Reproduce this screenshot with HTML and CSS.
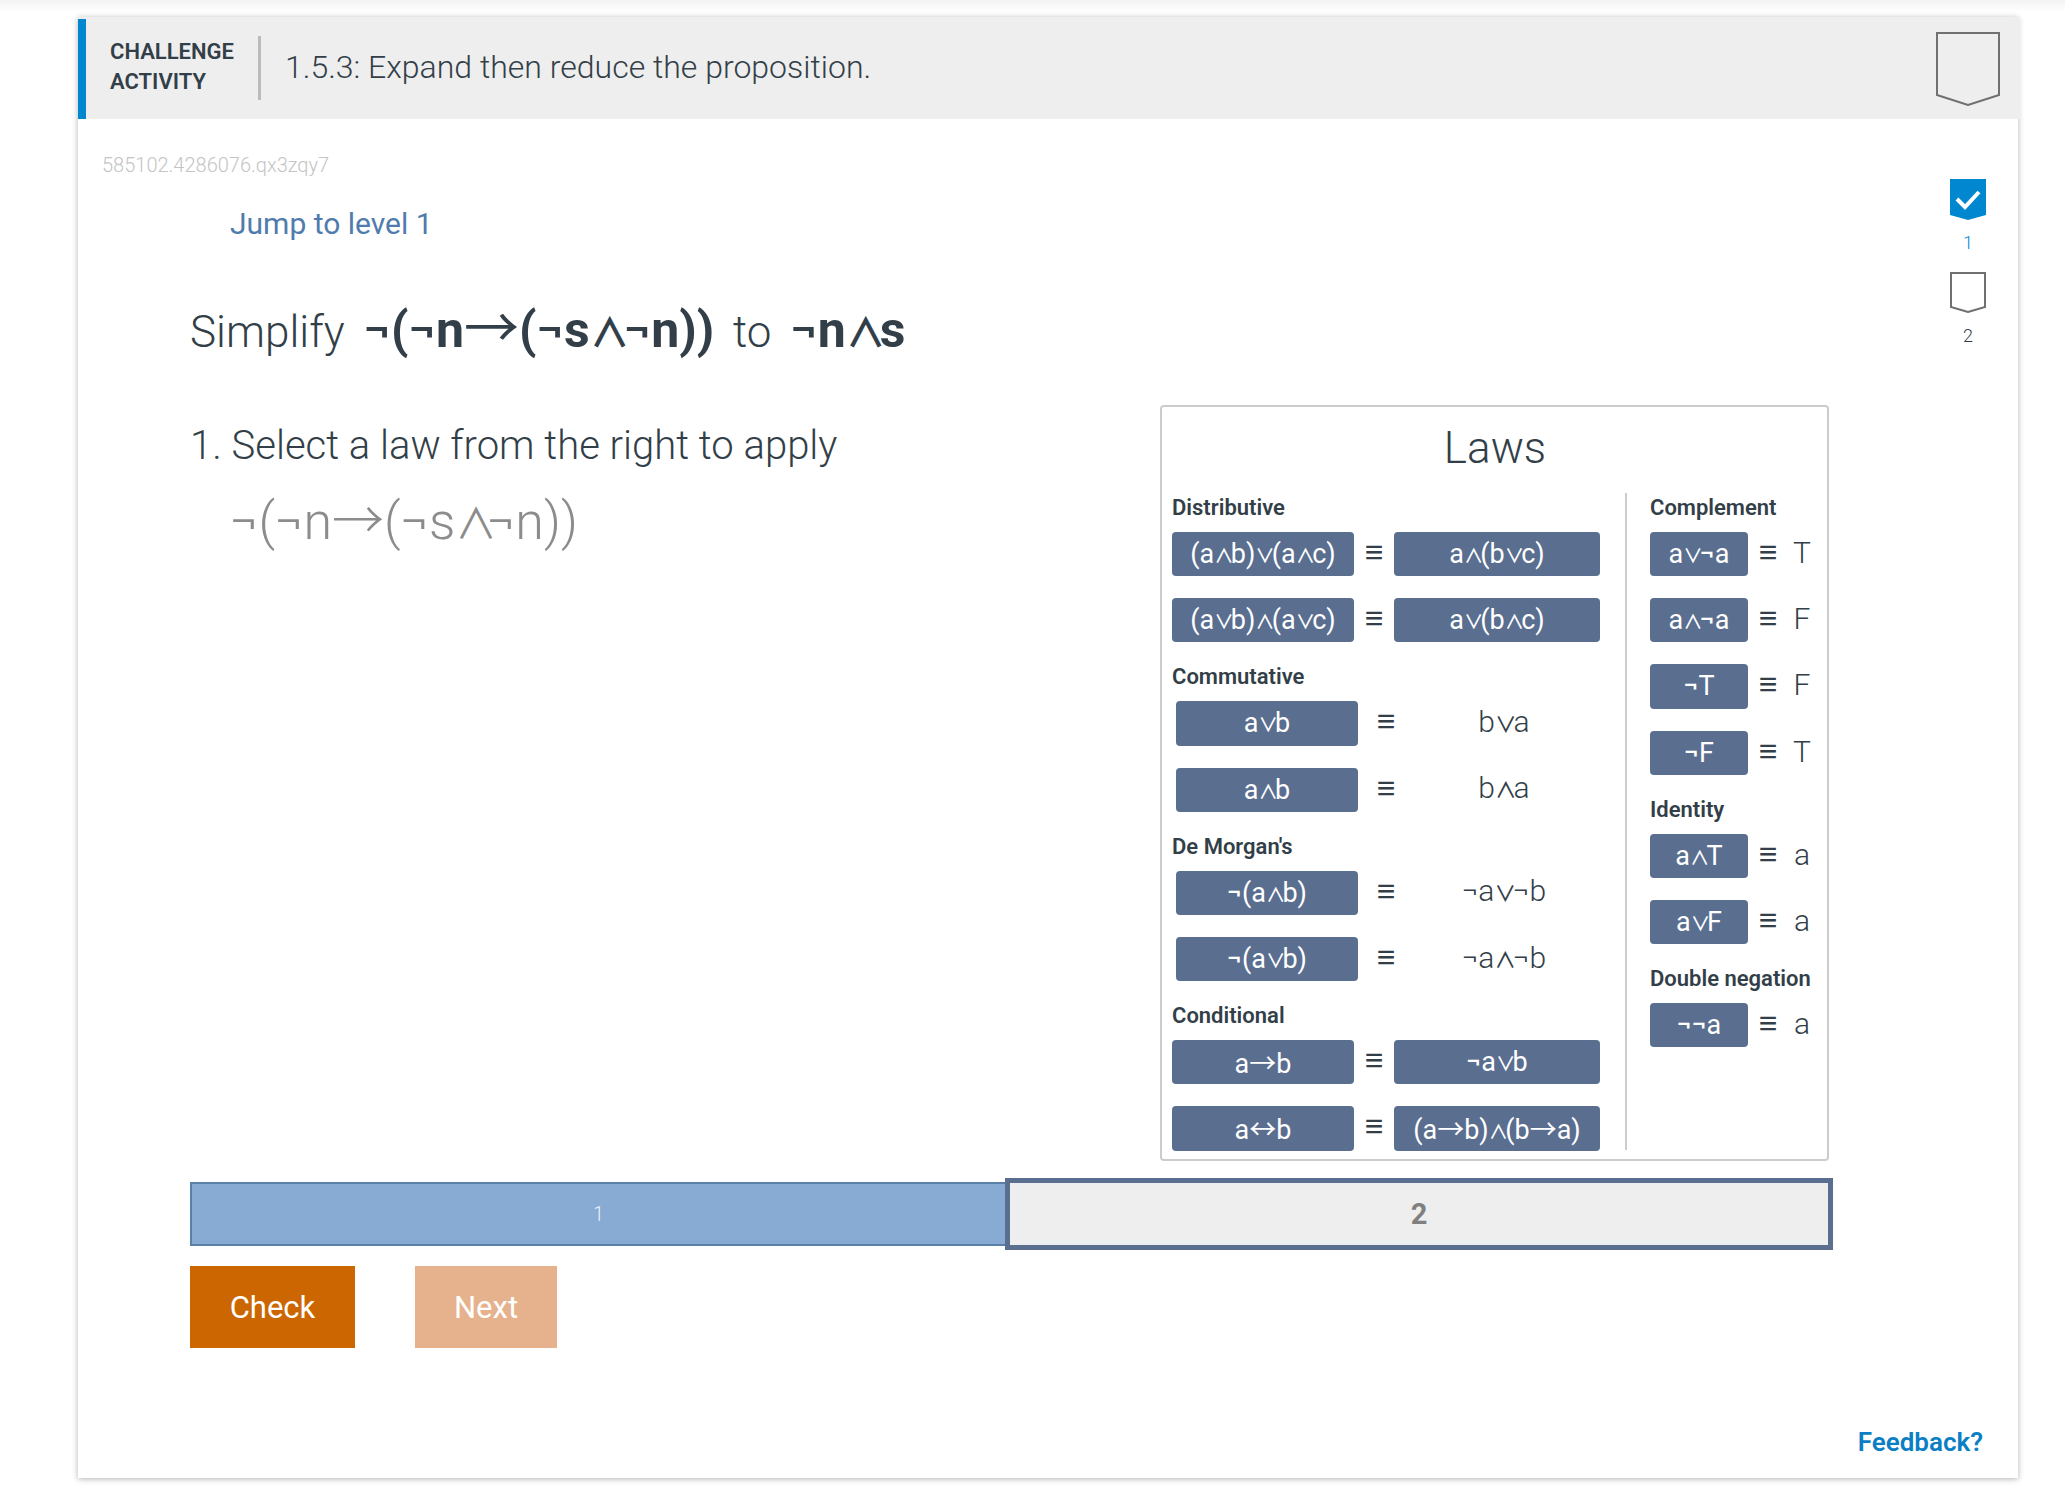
FILE: index.html
```html
<!DOCTYPE html>
<html lang="en">
<head>
<meta charset="utf-8">
<title>Challenge activity</title>
<link rel="stylesheet" href="styles.css">
</head>
<body>
<div class="page-shade"></div>
<div class="card">
  <header class="head">
    <div class="accent"></div>
    <div class="kind">CHALLENGE<br>ACTIVITY</div>
    <h1 class="title">1.5.3: Expand then reduce the proposition.</h1>
    <svg class="shield-big" viewBox="0 0 64 74"><polygon points="1,1 63,1 63,63 32,73 1,63" fill="none" stroke="#707070" stroke-width="2"/></svg>
  </header>
  <div class="body">
    <main class="main">
      <div class="code">585102.4286076.qx3zqy7</div>
      <a class="jump">Jump to level 1</a>
      <div class="prompt">Simplify <b>¬(¬n<i class="a">→</i>(¬s<i class="o">∧</i>¬n))</b> to <b>¬n<i class="o">∧</i>s</b></div>
      <div class="work">
        <div class="steps">
          <div class="step">1. Select a law from the right to apply</div>
          <div class="expr">¬(¬n<i class="a">→</i>(¬s<i class="o">∧</i>¬n))</div>
        </div>
        <section class="laws">
          <h2 class="laws-title">Laws</h2>
          <div class="laws-cols">
            <div class="col-left">
              <h3 class="group">Distributive</h3>
              <div class="law"><span class="chip w-l">(a<i class="o">∧</i>b)<i class="o">∨</i>(a<i class="o">∧</i>c)</span><span class="eq">≡</span><span class="chip w-r">a<i class="o">∧</i>(b<i class="o">∨</i>c)</span></div>
              <div class="law"><span class="chip w-l">(a<i class="o">∨</i>b)<i class="o">∧</i>(a<i class="o">∨</i>c)</span><span class="eq">≡</span><span class="chip w-r">a<i class="o">∨</i>(b<i class="o">∧</i>c)</span></div>
              <h3 class="group">Commutative</h3>
              <div class="law inset"><span class="chip w-l">a<i class="o">∨</i>b</span><span class="eq wide">≡</span><span class="res">b<i class="o">∨</i>a</span></div>
              <div class="law inset"><span class="chip w-l">a<i class="o">∧</i>b</span><span class="eq wide">≡</span><span class="res">b<i class="o">∧</i>a</span></div>
              <h3 class="group">De Morgan's</h3>
              <div class="law inset"><span class="chip w-l">¬(a<i class="o">∧</i>b)</span><span class="eq wide">≡</span><span class="res">¬a<i class="o">∨</i>¬b</span></div>
              <div class="law inset"><span class="chip w-l">¬(a<i class="o">∨</i>b)</span><span class="eq wide">≡</span><span class="res">¬a<i class="o">∧</i>¬b</span></div>
              <h3 class="group">Conditional</h3>
              <div class="law"><span class="chip w-l">a<i class="a">→</i>b</span><span class="eq">≡</span><span class="chip w-r">¬a<i class="o">∨</i>b</span></div>
              <div class="law"><span class="chip w-l">a<i class="a">↔</i>b</span><span class="eq">≡</span><span class="chip w-r">(a<i class="a">→</i>b)<i class="o">∧</i>(b<i class="a">→</i>a)</span></div>
            </div>
            <div class="col-right">
              <h3 class="group">Complement</h3>
              <div class="law"><span class="chip w-s">a<i class="o">∨</i>¬a</span><span class="eq small">≡</span><span class="val">T</span></div>
              <div class="law"><span class="chip w-s">a<i class="o">∧</i>¬a</span><span class="eq small">≡</span><span class="val">F</span></div>
              <div class="law"><span class="chip w-s">¬T</span><span class="eq small">≡</span><span class="val">F</span></div>
              <div class="law"><span class="chip w-s">¬F</span><span class="eq small">≡</span><span class="val">T</span></div>
              <h3 class="group">Identity</h3>
              <div class="law"><span class="chip w-s">a<i class="o">∧</i>T</span><span class="eq small">≡</span><span class="val">a</span></div>
              <div class="law"><span class="chip w-s">a<i class="o">∨</i>F</span><span class="eq small">≡</span><span class="val">a</span></div>
              <h3 class="group">Double negation</h3>
              <div class="law"><span class="chip w-s">¬¬a</span><span class="eq small">≡</span><span class="val">a</span></div>
            </div>
          </div>
        </section>
      </div>
      <div class="progress">
        <div class="seg done">1</div>
        <div class="seg active">2</div>
      </div>
      <div class="actions">
        <button class="btn check">Check</button>
        <button class="btn next">Next</button>
      </div>
    </main>
    <nav class="levels">
      <div class="level">
        <svg class="shield-small" viewBox="0 0 36 41"><polygon points="0,0 36,0 36,36 18,41 0,36" fill="#0087cf"/><path d="M7,20 L15,28 L29,13" fill="none" stroke="#fff" stroke-width="4"/></svg>
        <span class="level-num on">1</span>
      </div>
      <div class="level">
        <svg class="shield-small" viewBox="0 0 36 41"><polygon points="1,1 35,1 35,35 18,40 1,35" fill="none" stroke="#707070" stroke-width="2"/></svg>
        <span class="level-num">2</span>
      </div>
    </nav>
  </div>
  <footer class="foot"><a class="feedback">Feedback?</a></footer>
</div>
</body>
</html>
```

FILE: styles.css
```css
* { box-sizing: border-box; }
html, body { margin: 0; padding: 0; }
body {
  width: 2065px;
  height: 1493px;
  background: #fff;
  font-family: Roboto, "Liberation Sans", sans-serif;
  color: #333f48;
  position: relative;
  overflow: hidden;
}
.o {
  font-family: "Noto Sans CJK SC", sans-serif;
  font-style: normal;
  font-size: 0.72em;
  font-weight: 500;
  letter-spacing: -3px;
}
.a {
  font-family: "Noto Sans CJK SC", sans-serif;
  font-style: normal;
}
.prompt .o { font-size: 0.8em; font-weight: 700; letter-spacing: -6px; }
.expr .o { font-size: 0.8em; font-weight: 400; letter-spacing: -10px; }
.prompt .a { font-weight: 400; font-size: 1.1em; }
.page-shade {
  height: 12px;
  margin-bottom: 5px;
  background: linear-gradient(#f3f3f3, #fff);
}
.card {
  width: 1940px;
  height: 1461px;
  margin-left: 78px;
  background: #fff;
  box-shadow: 0 1px 6px rgba(0, 0, 0, 0.3);
  display: flex;
  flex-direction: column;
}
.head {
  height: 102px;
  width: 1942px;
  background: #eee;
  display: flex;
  align-items: center;
  flex: none;
}
.accent {
  width: 8px;
  height: 100px;
  margin-top: 2px;
  background: #0087cf;
}
.kind {
  margin-left: 24px;
  width: 147px;
  margin-top: -2px;
  font-size: 22px;
  line-height: 30px;
  font-weight: 600;
  color: #333f48;
}
.title {
  flex: 1;
  margin: 0 0 0 1px;
  height: 64px;
  border-left: 3px solid #bbb;
  padding-left: 24px;
  font-size: 32px;
  line-height: 62px;
  font-weight: 300;
  color: #333f48;
}
.shield-big { width: 64px; height: 74px; margin: 2px 20px 0 0; }
.body { flex: 1; display: flex; position: relative; }
.main { margin-left: 112px; width: 1643px; }
.code {
  margin-left: -88px;
  margin-top: 32px;
  height: 28px;
  font-size: 20px;
  line-height: 28px;
  font-weight: 300;
  color: #c4c4c4;
}
.jump {
  display: block;
  margin: 27px 0 0 40px;
  font-size: 30px;
  line-height: 36px;
  color: #4f7cac;
}
.prompt {
  margin-top: 51px;
  font-size: 44px;
  line-height: 60px;
  font-weight: 300;
  color: #333f48;
}
.prompt b { font-size: 50px; font-weight: 700; margin: 0 8px; }
.work { display: flex; justify-content: space-between; margin-top: 43px; padding-right: 4px; }
.step {
  font-size: 40px;
  line-height: 60px;
  font-weight: 300;
  color: #333f48;
  margin-top: 11px;
}
.expr {
  margin: 6px 0 0 40px;
  font-size: 52px;
  line-height: 70px;
  font-weight: 300;
  color: #8c8c8c;
}
.laws {
  width: 669px;
  height: 756px;
  border: 2px solid #ccc;
  border-radius: 4px;
  padding: 0 9px 9px 10px;
}
.laws-title {
  margin: 0;
  height: 86px;
  font-size: 44px;
  line-height: 82px;
  font-weight: 300;
  text-align: center;
  color: #333f48;
}
.laws-cols { display: flex; }
.col-left { width: 455px; border-right: 2px solid #ccc; height: 657px; }
.col-right { padding-left: 23px; }
.group {
  margin: 20px 0 9px;
  font-size: 22px;
  line-height: 30px;
  font-weight: 600;
  color: #333f48;
}
.col-left > .group:first-child, .col-right > .group:first-child { margin-top: 0; }
.law { display: flex; align-items: center; height: 44.2px; margin-bottom: 22px; }
.law:has(+ .group) { margin-bottom: 0; }
.col-left > .law:last-child, .col-right > .law:last-child { margin-bottom: 0; }
.inset { padding-left: 4px; }
.chip {
  height: 44.2px;
  background: #5a6e90;
  border-radius: 4px;
  color: #fff;
  font-size: 27px;
  line-height: 44px;
  text-align: center;
  white-space: nowrap;
}
.w-l { width: 182px; }
.w-r { width: 206px; }
.w-s { width: 98px; }
.eq {
  width: 40px;
  height: 44px;
  text-align: center;
  font-family: "Liberation Sans", sans-serif;
  font-size: 32px;
  color: #333f48;
  line-height: 40px;
}
.eq.wide { width: 56px; }
.eq.small { width: 40px; }
.res { flex: none; width: 180px; text-align: center; font-size: 30px; line-height: 40px; margin-bottom: 2px; font-weight: 300; color: #333f48; }
.val { width: 28px; text-align: center; font-size: 30px; line-height: 40px; margin-bottom: 2px; font-weight: 300; color: #333f48; }
.progress { display: flex; align-items: center; margin-top: 17px; height: 72px; }
.seg { display: flex; align-items: center; justify-content: center; }
.done {
  width: 817px;
  height: 64px;
  background: #87abd2;
  border: 2px solid #5b80a8;
  color: #e8f0f8;
  font-size: 20px;
  font-weight: 300;
}
.active {
  width: 828px;
  height: 72px;
  margin-left: -2px;
  background: #eee;
  border: 5px solid #5a6e90;
  color: #808080;
  font-size: 29px;
  font-weight: 700;
}
.actions { display: flex; gap: 60px; margin-top: 16px; }
.btn {
  height: 82px;
  border: 0;
  padding: 0;
  color: #fff;
  font-family: Roboto, "Liberation Sans", sans-serif;
  font-size: 31px;
}
.check { width: 165px; background: #cc6600; }
.next { width: 142px; background: #e6b28d; }
.levels { position: absolute; left: 1872px; top: 60px; width: 36px; }
.level { display: flex; flex-direction: column; align-items: center; height: 93px; }
.shield-small { width: 36px; height: 41px; flex: none; }
.level-num { margin-top: 12px; font-size: 18px; line-height: 22px; font-weight: 300; color: #333f48; }
.level-num.on { color: #0087cf; }
.foot { flex: none; height: 51px; padding-right: 35px; text-align: right; }
.feedback { font-size: 26px; line-height: 30px; font-weight: 600; color: #0c7fc4; }
```
